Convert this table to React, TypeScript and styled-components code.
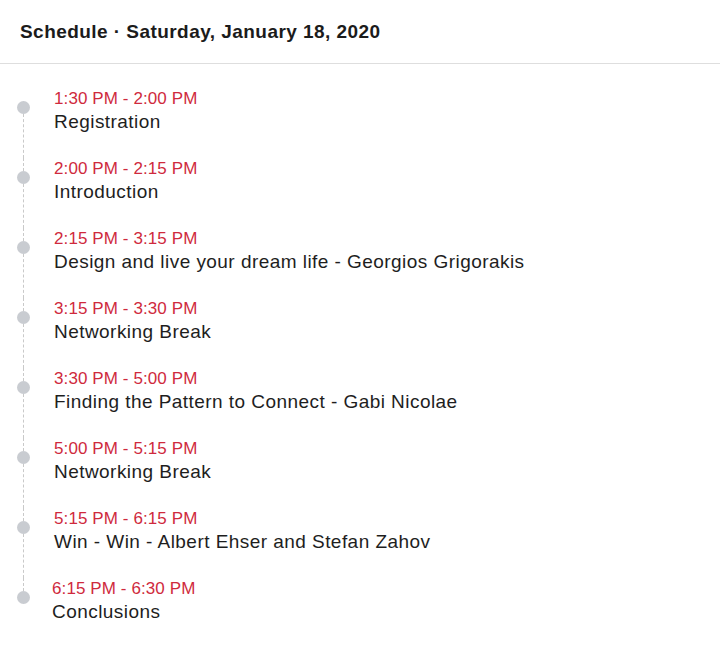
import React from "react";
import styled, { createGlobalStyle } from "styled-components";

const GlobalStyle = createGlobalStyle`
  html, body {
    margin: 0;
    padding: 0;
    background: #ffffff;
  }
  body {
    font-family: "Liberation Sans", Arial, sans-serif;
  }
`;

const Panel = styled.section`
  width: 720px;
  height: 649px;
  background: #ffffff;
  box-sizing: border-box;
  overflow: hidden;
`;

const Header = styled.header`
  padding: 20px 20px 19px 20px;
  border-bottom: 1px solid #dedede;
`;

const Heading = styled.h2`
  margin: 0;
  font-size: 19px;
  line-height: 24px;
  font-weight: 700;
  letter-spacing: 0.45px;
  color: #1b1b1b;
`;

const List = styled.ol`
  list-style: none;
  margin: 0;
  padding: 24px 0 0 0;
`;

const Item = styled.li`
  display: flex;
`;

const Marker = styled.div`
  width: 46px;
  flex: 0 0 46px;
  display: flex;
  flex-direction: column;
  align-items: center;
`;

const Segment = styled.div<{ $hidden?: boolean; $grow?: boolean }>`
  width: 0;
  border-left: 1px dashed ${(p) => (p.$hidden ? "transparent" : "#c9c9c9")};
  flex: ${(p) => (p.$grow ? "1 1 auto" : "0 0 13px")};
`;

const Dot = styled.span`
  width: 13px;
  height: 13px;
  border-radius: 50%;
  background: #c9ccd1;
  flex: 0 0 13px;
`;

const Body = styled.div<{ $last?: boolean }>`
  display: flex;
  flex-direction: column;
  padding: 0 0 ${(p) => (p.$last ? "0" : "23px")} ${(p) => (p.$last ? "6px" : "8px")};
`;

const Time = styled.span`
  font-size: 17px;
  line-height: 21px;
  color: #cf2a3d;
  letter-spacing: 0.1px;
`;

const Title = styled.span`
  font-size: 19px;
  line-height: 26px;
  color: #1e1e1e;
  letter-spacing: 0.45px;
`;

type Entry = { time: string; title: string };

const entries: Entry[] = [
  { time: "1:30 PM - 2:00 PM", title: "Registration" },
  { time: "2:00 PM - 2:15 PM", title: "Introduction" },
  { time: "2:15 PM - 3:15 PM", title: "Design and live your dream life - Georgios Grigorakis" },
  { time: "3:15 PM - 3:30 PM", title: "Networking Break" },
  { time: "3:30 PM - 5:00 PM", title: "Finding the Pattern to Connect - Gabi Nicolae" },
  { time: "5:00 PM - 5:15 PM", title: "Networking Break" },
  { time: "5:15 PM - 6:15 PM", title: "Win - Win - Albert Ehser and Stefan Zahov" },
  { time: "6:15 PM - 6:30 PM", title: "Conclusions" },
];

export default function App() {
  return (
    <>
      <GlobalStyle />
      <Panel>
        <Header>
          <Heading>Schedule · Saturday, January 18, 2020</Heading>
        </Header>
        <List>
          {entries.map((e, i) => {
            const first = i === 0;
            const last = i === entries.length - 1;
            return (
              <Item key={i}>
                <Marker>
                  <Segment $hidden={first} />
                  <Dot />
                  <Segment $grow $hidden={last} />
                </Marker>
                <Body $last={last}>
                  <Time>{e.time}</Time>
                  <Title>{e.title}</Title>
                </Body>
              </Item>
            );
          })}
        </List>
      </Panel>
    </>
  );
}
